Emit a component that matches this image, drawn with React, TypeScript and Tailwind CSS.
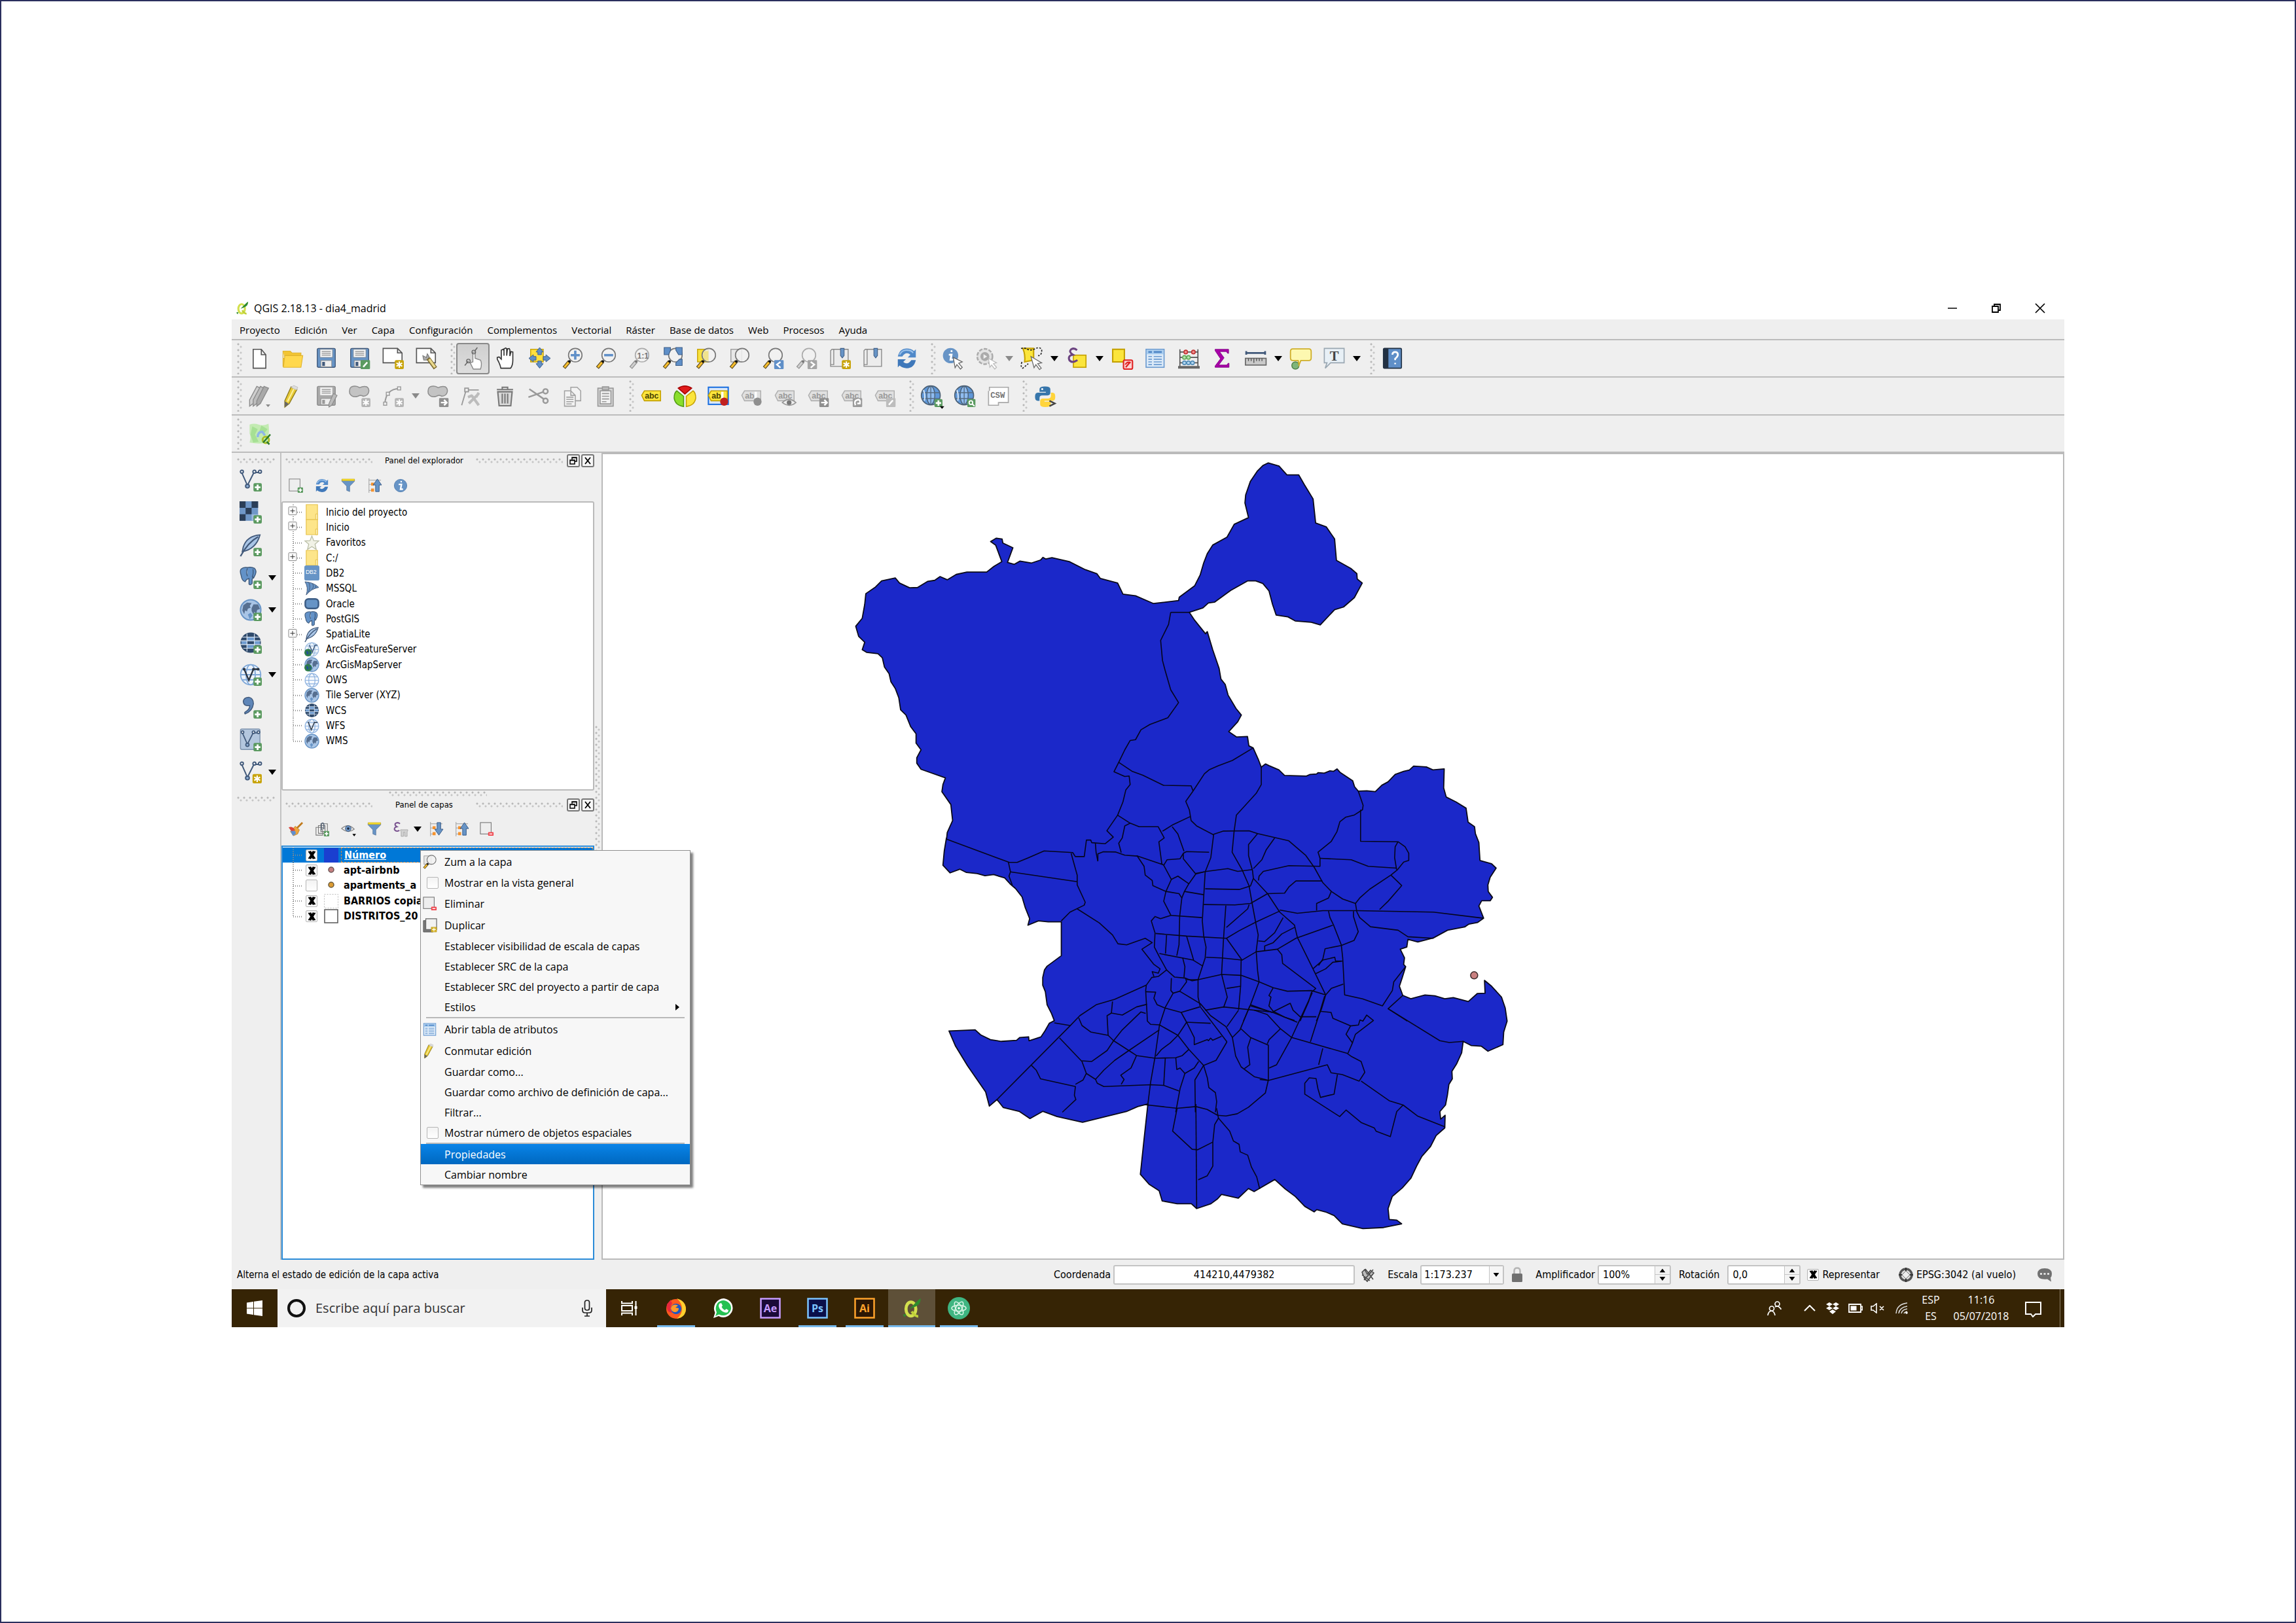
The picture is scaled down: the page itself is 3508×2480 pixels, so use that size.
import React, { ReactNode } from "react";

/* ---------- shared icon parts ---------- */

const Plus = () => (
  <g>
    <rect x="15" y="15" width="9" height="9" rx="1.5" fill="#5b9a60" />
    <path d="M19.500 16.500v6M16.500 19.500h6" stroke="#fff" strokeWidth="2" />
  </g>
);
const Star = ({ c = "#c8a40c" }: { c?: string }) => (
  <g>
    <rect x="14" y="14" width="10" height="10" rx="1.500" fill={c} />
    <path d="M19 15.500v7M15.800 17.200l6.400 3.600M22.200 17.200l-6.400 3.600" stroke="#fff" strokeWidth="1.500" />
  </g>
);
const Lens = ({ grey = false }: { grey?: boolean }) => (
  <g>
    <path d="M8 15.500L2 22.500" stroke={grey ? "#8f8f8f" : "#5a4a20"} strokeWidth="4" />
    <path d="M7.500 16L2.500 22" stroke={grey ? "#cfcfcf" : "#fbc02d"} strokeWidth="2.200" />
    <circle cx="8" cy="15.500" r="1.500" fill={grey ? "#777" : "#111"} />
    <circle cx="14.500" cy="8.500" r="7.500" fill="#f1f1f1" fillOpacity=".85" stroke={grey ? "#aaa" : "#777"} strokeWidth="1.200" />
  </g>
);
const Floppy = ({ grey = false }: { grey?: boolean }) => (
  <g>
    <rect x="2" y="1" width="20" height="21" rx="1.500" fill={grey ? "#a9a9a9" : "#6794c6"} stroke={grey ? "#8e8e8e" : "#41597a"} />
    <rect x="5" y="2" width="14" height="9" fill="#f4f4f4" stroke={grey ? "#aaa" : "#6b7a8c"} strokeWidth=".6" />
    <path d="M7 4.500h10M7 6.500h10M7 8.500h10" stroke="#8b8b8b" strokeWidth=".9" />
    <rect x="6" y="14.500" width="12" height="7" fill="#eee" stroke="#8a8a8a" strokeWidth=".6" />
    <rect x="7.500" y="16" width="3" height="4.500" fill={grey ? "#999" : "#41597a"} />
  </g>
);
const Tag = ({ grey = false, t = "abc" }: { grey?: boolean; t?: string }) => (
  <g>
    <path d="M1 11l3-5h18v11H4z" fill={grey ? "#e0e0e0" : "#fbe53c"} stroke={grey ? "#b0b0b0" : "#c4a000"} strokeWidth="1.100" />
    <text x="4.500" y="14.500" fontSize="9" fontWeight="700" fontFamily="Liberation Sans, sans-serif" fill={grey ? "#999" : "#4a4300"}>
      {t}
    </text>
  </g>
);
const Badge = ({ c, d }: { c: string; d: string }) => (
  <g>
    <rect x="13" y="14" width="10.500" height="10" rx="1" fill={c} />
    <path d={d} stroke="#fff" strokeWidth="1.800" fill="none" />
  </g>
);
const VLine = ({ c = "#41597a" }: { c?: string }) => (
  <g fill="none" stroke={c} strokeWidth="1.400">
    <path d="M2.500 4l6 13.500L15.500 3.500h6" />
    <circle cx="2.500" cy="2.700" r="1.600" fill="#fff" />
    <circle cx="8.500" cy="18.200" r="2" fill="#8fb0d6" />
    <circle cx="16" cy="2.700" r="1.600" fill="#fff" />
    <circle cx="22" cy="2.700" r="1.600" fill="#fff" />
  </g>
);
const Wire = ({ fill, stroke }: { fill: string; stroke: string }) => (
  <g fill="none" stroke={stroke} strokeWidth="1.300">
    <circle cx="12" cy="12" r="10.800" fill={fill} />
    <ellipse cx="12" cy="12" rx="5" ry="10.800" />
    <path d="M1.200 12h21.600M3 6.500h18M3 17.500h18" />
  </g>
);
const WebGlobe = () => (
  <g>
    <circle cx="11" cy="11" r="10.500" fill="#5f97d8" stroke="#4b6075" strokeWidth="1.200" />
    <ellipse cx="11" cy="11" rx="4.500" ry="10" fill="#8fbcf0" stroke="#4b6075" strokeWidth="1" />
    <path d="M1 8h20M1 14.500h20M11 .5v21" stroke="#566b80" strokeWidth="1" />
    <path d="M3 5q2 6 1 12" stroke="#dcebfb" strokeWidth="1.300" fill="none" />
  </g>
);
const Earth = () => (
  <g>
    <circle cx="12" cy="12" r="11" fill="#a9c5e6" stroke="#6794c6" strokeWidth="1.400" />
    <path d="M4 7l4-3 5 .5-2 3 1 2-3 1-1 3-2-1-1 4-2-4zM13 10l2-4 5 0 2 5-3 1-1 4-2-2-1 3-2-4z" fill="#41597a" opacity=".8" />
    <path d="M9 17l3-2 2 3-3 4z" fill="#6794c6" />
  </g>
);
const DarkGlobe = () => (
  <g>
    <circle cx="12" cy="12" r="11" fill="#2f4a6b" />
    <path d="M8 6h8v4H8zM2 10h6v4H2zM16 10h6v4h-6zM8 14h8v4H8z" fill="#6f9cd0" />
    <path d="M1 10h22M1 14h22M3 6h18M4 18h16M8 2.500v19M16 2.500v19" stroke="#dfe9f5" strokeWidth=".8" />
  </g>
);
const Elephant = () => (
  <path d="M2 3q3-3 8-2 5-1 9 1 3 3 1 8l-2 4-1-1-1 3v5q-2 3-4 1V15l-3 1-2 3q-4-1-5-8Q0 5 2 3zM10 2q-2 5 0 10M17 3q1 6-1 10" fill="#6392c8" stroke="#3f5b7d" strokeWidth="1.200" />
);
const Feather = () => (
  <g>
    <path d="M22 1Q8 2 4 14l-1 5Q18 16 22 1z" fill="#a9c5e6" stroke="#41597a" strokeWidth="1.300" />
    <path d="M20 3Q9 9 1 24" fill="none" stroke="#41597a" strokeWidth="1.600" />
  </g>
);
const Folder = () => (
  <g>
    <path d="M3 0h18v24H3z" fill="#fde58a" stroke="#e6c14a" strokeWidth="1.200" />
    <path d="M18 15h3v9h-3z" fill="#fdf0b5" stroke="#e6c14a" />
  </g>
);
const Refresh = () => (
  <g fill="#5089c9">
    <path d="M2 10Q4 1 12 1q5 0 8 3l2-2v9h-9l3-3q-5-4-9 2z" />
    <path d="M22 14q-2 9-10 9-5 0-8-3l-2 2v-9h9l-3 3q5 4 9-2z" fill="#3f78ba" />
    <path d="M4 8q3-6 9-5 4 0 6 3" stroke="#9cc3ec" strokeWidth="1.500" fill="none" />
  </g>
);
const Info = () => (
  <g>
    <circle cx="12" cy="12" r="10.500" fill="#6794c6" stroke="#5580b0" />
    <path d="M13 5.500h.1M10 10h3.500l-1.500 8h3" stroke="#fff" strokeWidth="2.600" fill="none" strokeLinecap="round" />
  </g>
);
const Funnel = () => (
  <g>
    <path d="M1.500 2h21v3l-8 8v9l-5-2v-7l-8-8z" fill="#6794c6" stroke="#55749a" strokeWidth=".8" />
    <path d="M1.500 1h21v3h-21z" fill="#f5dc2a" stroke="#c4a000" strokeWidth=".5" />
  </g>
);
const TreeArrow = ({ down = false }: { down?: boolean }) => (
  <g>
    <path d="M3 0v24M3 3h20M3 10h7M3 20h7" stroke="#999" fill="none" />
    <path d="M6.500 7h5v5h-5zM6.500 17h5v5h-5z" fill="#f6922d" />
    <path d={down ? "M14 1h6v11h4l-7 10-7-10h4z" : "M14 22h6V11h4L17 1l-7 10h4z"} fill="#6794c6" stroke="#355683" />
  </g>
);
const Pencil = () => (
  <g>
    <path d="M10 1.500l6.500 3L8 20l-5 4 0-7z" fill="#e8ca35" stroke="#8d7a1c" strokeWidth="1" />
    <path d="M13.500 3L6 18" stroke="#fbf0a0" strokeWidth="1.500" />
    <path d="M10 2l3-2 4.500 2-1.500 3z" fill="#ddd" stroke="#bbb" strokeWidth=".6" />
    <path d="M3 17.500l4.500 3L3 24z" fill="#666" />
  </g>
);
const Blob = () => (
  <path d="M3 1.500q5-2 9 1 4-2 8-1 3 2 2 6-1 4-6 4.500-3-2-6 0-6 2-9-3-1-6 2-7.500z" fill="#c3c3c3" stroke="#8d8d8d" strokeWidth="1.100" />
);

const ICONS: Record<string, ReactNode> = {
  newFile: <path d="M5 2h9l5 6v15H5zM14 2v6h5" fill="#fff" stroke="#555" strokeWidth="1.200" />,
  open: (
    <g stroke="#dfb32f" strokeWidth=".8">
      <path d="M1 4h8l2 2h10v6H1zM1 4v17h4" fill="#f2c433" />
      <path d="M3 9h20l-2 13H1.500z" fill="#ffd84d" />
    </g>
  ),
  save: <Floppy />,
  saveAs: (
    <g>
      <Floppy />
      <Badge c="#5b9a60" d="M16 21.500l4.500-5" />
    </g>
  ),
  composer: (
    <g>
      <path d="M1 1h16l5 5v11H1zM17 1v5h5" fill="#fff" stroke="#555" strokeWidth="1.200" />
      <Star />
    </g>
  ),
  manager: (
    <g>
      <path d="M1 1h16l5 5v11H1zM17 1v5h5" fill="#fff" stroke="#555" strokeWidth="1.200" />
      <path d="M8 9l4 2 1-4 2 3-1 4-5 0z" fill="#aaa" stroke="#777" strokeWidth=".8" />
      <path d="M14 12l8 11" stroke="#7d6c33" strokeWidth="4.600" />
      <path d="M15 13l6.500 9" stroke="#ead98c" strokeWidth="2.600" />
    </g>
  ),
  touch: (
    <g>
      <path d="M9 17l3-1V6q1.500-2 2.500 0v6l6 2q2 4 0 10h-8z" fill="#fff" stroke="#888" />
      <path d="M14 4l3-4M7 15l-4 5" stroke="#666" strokeWidth="1.100" />
      <circle cx="13" cy="5" r="2" fill="none" stroke="#666" />
      <circle cx="7" cy="15" r="2" fill="none" stroke="#666" />
    </g>
  ),
  hand: (
    <path d="M6 23Q5 18 2 13l0-2 2-.5L6.500 13V3l2-1 1 1.500V9 1.500l2-1 1 1V9l.8-7.500 2-.3.700 1.300V9.500l1.300-5 2 .5v9q0 6-2.500 9z" fill="#fff" stroke="#333" strokeWidth="1.200" />
  ),
  panSel: (
    <g>
      <rect x="2" y="2" width="14" height="14" fill="#ffdf3d" stroke="#c4a000" />
      <path d="M12 0l4 5h-2v3h-4V5H8zM12 23l4-5h-2v-3h-4v3H8zM0 12l5-4v2h3v4H5v2zM24 12l-5-4v2h-3v4h3v2z" fill="#5f8fc8" stroke="#3f5f88" strokeWidth=".7" />
    </g>
  ),
  zoomIn: (
    <g>
      <Lens />
      <path d="M14.500 3.500v10M9.500 8.500h10" stroke="#5f8fc8" strokeWidth="2.600" />
    </g>
  ),
  zoomOut: (
    <g>
      <Lens />
      <path d="M9.500 8.500h10" stroke="#5f8fc8" strokeWidth="2.600" />
    </g>
  ),
  zoomOne: (
    <g>
      <Lens grey />
      <text x="9" y="12" fontSize="9" fontWeight="700" fontFamily="Liberation Sans, sans-serif" fill="#777">
        1:1
      </text>
    </g>
  ),
  zoomFull: (
    <g>
      <Lens />
      <path d="M2 0h7v3L7 8H2zM22 0h-7v3l3 5h4zM22 20h-7v-3l4-4h3z" fill="#5f8fc8" stroke="#3f5f88" strokeWidth=".8" />
    </g>
  ),
  zoomSel: (
    <g>
      <rect x="2" y="2" width="12" height="14" fill="#f8e23d" stroke="#c4a000" />
      <Lens />
      <path d="M9 4h5v11Q8 14 8 9z" fill="#efe07a" opacity=".8" />
    </g>
  ),
  zoomLayer: (
    <g>
      <rect x="2" y="2" width="12" height="14" fill="#e8e8e8" stroke="#999" />
      <Lens />
    </g>
  ),
  zoomLast: (
    <g>
      <Lens />
      <Badge c="#5f8fc8" d="M20 16l-4 3 4 3.500" />
    </g>
  ),
  zoomNext: (
    <g>
      <Lens grey />
      <Badge c="#a5a5a5" d="M16.500 16l4 3-4 3.500" />
    </g>
  ),
  bookNew: (
    <g>
      <path d="M3 2h18v19H1.500V3.500zM5 2v17H1.500" fill="#ececec" stroke="#888" />
      <path d="M12.500 1h4v8l-2 2.500-2-2.500z" fill="#6794c6" stroke="#3f5f88" strokeWidth=".8" />
      <Star />
    </g>
  ),
  book: (
    <g>
      <path d="M3 2h18v19H1.500V3.500zM5 2v17H1.500" fill="#ececec" stroke="#888" />
      <path d="M12.500 1h4v8l-2 2.500-2-2.500z" fill="#6794c6" stroke="#3f5f88" strokeWidth=".8" />
    </g>
  ),
  refresh: <Refresh />,
  identify: (
    <g>
      <circle cx="9" cy="9" r="8.500" fill="#6794c6" />
      <path d="M10 4h.1M8 8h2l-1 5.500h2" stroke="#fff" strokeWidth="2.200" fill="none" strokeLinecap="round" />
      <path d="M12 11l10 5-4 1.500 4 4.500-2 2-4-5-2 3.500z" fill="#fff" stroke="#666" strokeWidth=".9" />
    </g>
  ),
  action: (
    <g>
      <circle cx="10" cy="10" r="8.500" fill="#e2e2e2" stroke="#aaa" strokeWidth="1.800" strokeDasharray="4 1.500" />
      <circle cx="10" cy="10" r="5" fill="#aaa" />
      <path d="M8.500 7.500l4 2.500-4 2.500z" fill="#eee" />
      <path d="M14 12l9 5-3.500 1 3.500 4-2 2-3.500-4.500-2 2.500z" fill="#fff" stroke="#bbb" strokeWidth=".9" />
    </g>
  ),
  select: (
    <g>
      <path d="M2 1h12v13l-10 2q1-8-2-15z" fill="#fbe53c" stroke="#c4a000" strokeWidth="1.500" />
      <path d="M0 1q5-1 7 1 5 2 9-1 6-2 7 2 0 6-4 6M1 16q-2 6 1 7l6-5" fill="none" stroke="#222" strokeWidth="1.200" strokeDasharray="2 1.500" />
      <path d="M11 10l12 7-4.500 1 4 5-2 1.500-4-5.500-2 3.500z" fill="#fff" stroke="#666" strokeWidth=".9" />
    </g>
  ),
  selExpr: (
    <g>
      <rect x="8" y="8.500" width="14" height="13.500" fill="#fbe53c" stroke="#c4a000" strokeWidth="1.200" />
      <path d="M12 3Q9 0 5.500 2q-3 3 2 6-6 1-4 6 3 4 9 0" fill="none" stroke="#6b4380" strokeWidth="2.200" />
    </g>
  ),
  deselect: (
    <g>
      <rect x="1.500" y="2" width="13" height="14" fill="#fbe53c" stroke="#c4a000" strokeWidth="1.500" />
      <rect x="13.500" y="14" width="10" height="10" rx="1.500" fill="#fbd3d3" stroke="#e02020" strokeWidth="1.500" />
      <path d="M16 22l5-6M15.500 19q2-4 6-2" stroke="#e02020" strokeWidth="1.500" fill="none" />
    </g>
  ),
  table: (
    <g>
      <rect x="1.500" y="2" width="20" height="20" fill="#dceaf8" stroke="#6a9ad0" strokeWidth="1.200" />
      <path d="M2 3h19v4.500H2z" fill="#a9cdef" />
      <path d="M4 5h4M10 5h9" stroke="#4f86c6" strokeWidth="2" />
      <path d="M4 10h4M10 10h9M4 13h4M10 13h9M4 16h4M10 16h9M4 19h4M10 19h9" stroke="#6a9ad0" strokeWidth="1.100" />
    </g>
  ),
  abacus: (
    <g>
      <path d="M2 2v19M22 2v19M2 5h20M2 11h20M2 17h20" stroke="#555" strokeWidth="1.200" />
      <path d="M0 20.500h24v3H0z" fill="#666" />
      <g strokeWidth="1.100">
        <circle cx="8.500" cy="5" r="2" fill="#f09090" stroke="#c03030" />
        <circle cx="17" cy="5" r="2" fill="#f09090" stroke="#c03030" />
        <circle cx="7" cy="11" r="2" fill="#b6e3b0" stroke="#5faa58" />
        <circle cx="11.500" cy="11" r="2" fill="#b6e3b0" stroke="#5faa58" />
        <circle cx="7" cy="17" r="2" fill="#b0d4ee" stroke="#4f8ab6" />
        <circle cx="11.500" cy="17" r="2" fill="#b0d4ee" stroke="#4f8ab6" />
        <circle cx="16" cy="17" r="2" fill="#b0d4ee" stroke="#4f8ab6" />
      </g>
    </g>
  ),
  sigma: <path d="M4 2h15v4.500h-1L16.500 4.500H9l5 7-6 8h9l1.500-2h1V22H4v-1.500l6-8-6-9z" fill="#a800a8" stroke="#7c0080" strokeWidth=".6" />,
  measure: (
    <g>
      <path d="M1.500 6h21M1.500 4v4M22.500 4v4" stroke="#41597a" strokeWidth="2" />
      <rect x=".6" y="12" width="23" height="7.500" fill="#c9c9c9" stroke="#666" strokeWidth="1.200" />
      <path d="M4 12v3M7 12v3M10 12v5M13 12v3M16 12v3M19 12v3" stroke="#555" strokeWidth="1" />
    </g>
  ),
  mapTip: (
    <g>
      <circle cx="6" cy="20" r="4" fill="#7fb57a" stroke="#4d8048" />
      <path d="M3 1.500h18q2.500 0 2.500 3v7q0 3-2.500 3h-9l-2 5-1-5H3q-2.500 0-2.500-3v-7q0-3 2.500-3z" fill="#fdf8b0" stroke="#cfae28" strokeWidth="1.300" />
    </g>
  ),
  annotation: (
    <g>
      <path d="M1 1h22v16H8l-6 6 2-6H1z" fill="#e8f0f6" stroke="#9aa7b2" strokeWidth="1.200" />
      <text x="12" y="14.500" textAnchor="middle" fontSize="15" fontWeight="700" fontFamily="Liberation Serif, serif" fill="#444">
        T
      </text>
    </g>
  ),
  help: (
    <g>
      <rect x="2" y="1" width="20" height="22" rx="1" fill="#5f8fc8" stroke="#223143" strokeWidth="1.200" />
      <path d="M2 1h5.500v22H2z" fill="#223143" />
      <path d="M12 8q0-3 3-3t3 3q0 2-3 4.500V14M15 17v1.500" stroke="#fff" strokeWidth="2" fill="none" />
    </g>
  ),
  pencils: (
    <g stroke="#8b8b8b" strokeWidth="1">
      <path d="M9 1l4 2L5 20l-4 3V16z" fill="#cfcfcf" />
      <path d="M13 1l4 2L9 20l-4 3V16z" fill="#bdbdbd" />
      <path d="M17 1l5 2L13 20l-4 3V17z" fill="#a9a9a9" />
      <path d="M19 21h5l-2.500 3z" fill="#888" stroke="none" />
    </g>
  ),
  pencil: <Pencil />,
  saveEdits: (
    <g>
      <Floppy grey />
      <path d="M20 9l4 2-6 11-3 2v-4z" fill="#bbb" stroke="#888" strokeWidth=".8" />
    </g>
  ),
  addFeature: (
    <g>
      <Blob />
      <Star c="#b5b5b5" />
    </g>
  ),
  curve: (
    <g>
      <path d="M3 20Q4 4 19 3.500" fill="none" stroke="#999" strokeWidth="1.500" />
      <g fill="#eee" stroke="#999">
        <rect x="1.500" y="18.500" width="3.500" height="3.500" />
        <rect x="4.500" y="7.500" width="3.500" height="3.500" />
        <rect x="17" y="1.500" width="3.500" height="3.500" />
      </g>
      <Star c="#b5b5b5" />
    </g>
  ),
  moveFeature: (
    <g>
      <Blob />
      <Badge c="#8f8f8f" d="M15 19h6M18.500 16l3 3-3 3" />
    </g>
  ),
  nodeTool: (
    <g stroke="#999" strokeWidth="1.300" fill="none">
      <path d="M6 5h14M6 5L1 22" />
      <rect x="4.500" y="3" width="4" height="4" fill="#eee" />
      <path d="M9 20L20 9M12 11l8 11M17 13l3-5M8 13l5-2" strokeWidth="3" stroke="#bcbcbc" />
    </g>
  ),
  trash: (
    <g fill="none" stroke="#777" strokeWidth="1.500">
      <path d="M4 7h16l-1.500 15.500h-13z" fill="#d9d9d9" />
      <path d="M3 4.500h18M9 4V2h6v2M9 9v11M12 9v11M15 9v11" />
    </g>
  ),
  scissors: (
    <g stroke="#999" strokeWidth="1.800" fill="none">
      <path d="M2 4l16 11M1 13l17-6" />
      <circle cx="20" cy="6.500" r="2.600" />
      <circle cx="20" cy="17" r="2.600" />
    </g>
  ),
  copy: (
    <g fill="#f3f3f3" stroke="#a2a2a2" strokeWidth="1.100">
      <path d="M11 2h7l4 4v11H11z" />
      <path d="M4 6h7l5 5v12H4zM11 6v5h5" />
      <path d="M6 13h8M6 15.500h8M6 18h8M6 20.500h6" />
    </g>
  ),
  paste: (
    <g fill="#f3f3f3" stroke="#999" strokeWidth="1.200">
      <rect x="4" y="3" width="17" height="20" fill="#d5d5d5" />
      <path d="M6.500 6h12v14.500h-12z" />
      <path d="M9 1.500h7V5H9z" fill="#bbb" />
      <path d="M8.500 9h8M8.500 12h8M8.500 15h8M8.500 18h5" />
    </g>
  ),
  label: <Tag />,
  pie: (
    <g strokeWidth="1.100">
      <path d="M10.500 12v11.500Q1 22 0 14q0-6 3-8z" fill="#8ade2c" stroke="#4f9a10" />
      <path d="M12 9.500L4.500 3Q8 .5 12 .5T19.500 3z" fill="#e01b1b" stroke="#a50000" />
      <path d="M13.500 12L21 6q3 2 3 8-1 8-10.500 9.500z" fill="#fbe53c" stroke="#c4a000" />
    </g>
  ),
  labelPin: (
    <g>
      <rect x="1" y="2" width="22" height="19" fill="#dbe8f8" stroke="#1b6fe0" strokeWidth="1.500" />
      <Tag t="ab" />
      <path d="M16.500 7v10" stroke="#fff" strokeWidth="2.500" />
      <circle cx="18.500" cy="18" r="4.500" fill="#c02020" />
    </g>
  ),
  labelPinGrey: (
    <g>
      <Tag grey t="ab" />
      <path d="M16.500 7v10" stroke="#fff" strokeWidth="2.500" />
      <circle cx="18.500" cy="18" r="4.500" fill="#8f8f8f" />
    </g>
  ),
  labelEye: (
    <g>
      <Tag grey />
      <path d="M9 19q7-7 15 0-7 6-15 0z" fill="#eee" stroke="#999" strokeWidth="1.300" />
      <circle cx="16.500" cy="19" r="2.600" fill="#777" />
    </g>
  ),
  labelMove: (
    <g>
      <Tag grey />
      <Badge c="#8f8f8f" d="M15 19h6M18.500 16l3 3-3 3" />
    </g>
  ),
  labelRotate: (
    <g>
      <Tag grey />
      <Badge c="#9b9b9b" d="M16 22q-2-5 2-6t3 4l-3 0" />
    </g>
  ),
  labelEdit: (
    <g>
      <Tag grey />
      <Badge c="#bdbdbd" d="M16 21.500l4.500-5" />
    </g>
  ),
  globePlus: (
    <g>
      <WebGlobe />
      <Plus />
      <path d="M21 23h5l-2.500 3z" fill="#000" />
    </g>
  ),
  globeSearch: (
    <g>
      <WebGlobe />
      <rect x="14.500" y="15" width="9" height="9" rx="1" fill="#5b9a60" />
      <circle cx="18.500" cy="19" r="2" fill="none" stroke="#fff" strokeWidth="1.300" />
      <path d="M20 20.500l2.500 2.500" stroke="#fff" strokeWidth="1.500" />
    </g>
  ),
  csw: (
    <g>
      <path d="M1 6v16h11v-3h11V2H2v4" fill="#fff" stroke="#a8a8a8" strokeWidth="1.200" />
      <text x="3" y="14" fontSize="9" fontFamily="Liberation Mono, monospace" fontWeight="700" fill="#777">
        CSW
      </text>
    </g>
  ),
  python: (
    <g>
      <path d="M12 1Q6 1 6 4v3h7v1H4Q1 8 1 12.500T4 17h2v-3q0-3 3-3h6q3 0 3-3V4q0-3-6-3z" fill="#3776ab" />
      <path d="M12.500 24q6 0 6-3v-3h-7v-1h9q3 0 3-4.500T20.500 8h-1.800v3.500q0 3-3 3h-6q-3 0-3 3V21q0 3 5.800 3z" fill="#ffd43b" />
      <circle cx="9" cy="4" r="1.100" fill="#fff" />
      <path d="M17 17l6 3-6 3" stroke="#444" strokeWidth="1.800" fill="none" />
    </g>
  ),
  osm: (
    <g>
      <path d="M1 2q5-2 10 0t11-1q1 8 0 12t-1 9q-9 2-20 0 2-6 0-10z" fill="#c3ebb2" />
      <path d="M4 4l6 3-3 6 4 8-6 1-3-9zM14 3l7 4-4 5-5-3z" fill="#9fdd8c" opacity=".8" />
      <path d="M10 16q0-6 5-6l3 4" stroke="#8fb6e8" strokeWidth="2.500" fill="none" />
      <circle cx="19" cy="19" r="3.500" fill="none" stroke="#a8c026" strokeWidth="2.200" />
      <path d="M16 22l8-9M20 21l3 3" stroke="#2d7a2d" strokeWidth="1.800" />
    </g>
  ),
  qgis: (
    <g>
      <ellipse cx="11" cy="13" rx="6" ry="8.500" fill="none" stroke="#d3e04e" strokeWidth="3.800" />
      <path d="M12 16q4 6 8 6" stroke="#c0d038" strokeWidth="3.200" fill="none" />
      <path d="M9 13L19 3q2-2 4-3 0 4-2 7-3 3-7 4z" fill="#2e8b2e" />
      <path d="M1 20l4-1-1 4z" fill="#2e8b2e" />
    </g>
  ),
  vector: (
    <g>
      <VLine />
      <Plus />
    </g>
  ),
  raster: (
    <g>
      <rect x="0" y="0" width="20" height="21" fill="#6f97c8" />
      <path d="M0 0h6.500v7H0zM13 0h7v7h-7zM6.500 7h6.500v7H6.500zM0 14h6.500v7H0z" fill="#2b3e58" />
      <path d="M13 14h7v7h-7z" fill="#9db9dc" />
      <Plus />
    </g>
  ),
  spatialite: (
    <g>
      <Feather />
      <Plus />
    </g>
  ),
  postgis: (
    <g>
      <g transform="scale(.85)">
        <Elephant />
      </g>
      <Plus />
    </g>
  ),
  wms: (
    <g>
      <Earth />
      <Plus />
    </g>
  ),
  wcs: (
    <g>
      <DarkGlobe />
      <Plus />
    </g>
  ),
  wfs: (
    <g>
      <Wire fill="#eef4fb" stroke="#7fa8d8" />
      <path d="M5 6l5 12L15 6h5" stroke="#2b3440" strokeWidth="1.600" fill="none" />
      <circle cx="5" cy="6" r="1.500" fill="#2b3440" />
      <circle cx="15" cy="6" r="1.500" fill="#2b3440" />
      <circle cx="20" cy="6" r="1.500" fill="#2b3440" />
      <Plus />
    </g>
  ),
  comma: (
    <g>
      <path d="M4 5q1-4 6-4 5 1 5 7-1 8-9 11-1-1 0-2 5-3 5-7-7 1-7-5z" fill="#5f86b8" stroke="#41597a" />
      <Plus />
    </g>
  ),
  virtual: (
    <g>
      <rect x="1" y="0" width="21" height="22" rx="1.500" fill="#b4c7de" stroke="#7d93ad" />
      <g transform="translate(1 1) scale(.88)">
        <VLine />
      </g>
      <Plus />
    </g>
  ),
  newShape: (
    <g>
      <VLine />
      <Star />
    </g>
  ),
  addLayer: (
    <g>
      <rect x="1" y="1" width="18" height="20" fill="#eee" stroke="#8a8a8a" strokeWidth="1.200" />
      <Plus />
    </g>
  ),
  funnel: <Funnel />,
  collapse: <TreeArrow />,
  expand: <TreeArrow down />,
  info: <Info />,
  folder: <Folder />,
  star: <path d="M12 1l3 7.500 8 .5-6 5 2 8.500-7-4.500-7 4.500L7 14 1 9l8-.5z" fill="#f1f2e6" stroke="#b9bda4" strokeWidth="1.300" />,
  db2: (
    <g>
      <rect x="0" y="0" width="24" height="24" rx="3" fill="#6794c6" />
      <text x="2" y="14" fontSize="9" fontFamily="Liberation Sans, sans-serif" fill="#fff">
        DB2
      </text>
    </g>
  ),
  mssql: (
    <g>
      <path d="M1 1q14 1 22 9-12 2-20 12 4-12-2-21z" fill="#6794c6" stroke="#41597a" />
      <path d="M7 2q4 8-1 16M13 4q3 5-1 9M18 7q1 3-1 5" stroke="#41597a" fill="none" />
    </g>
  ),
  oracle: <rect x="1.500" y="4.500" width="21" height="15" rx="5" fill="#6794c6" stroke="#3c5c84" strokeWidth="2.600" />,
  elephant: <Elephant />,
  feather: <Feather />,
  arcFeature: (
    <g>
      <Wire fill="#eef4fb" stroke="#9dbde2" />
      <path d="M8 5l5 11 4-11h4" stroke="#41597a" strokeWidth="1.600" fill="none" />
      <circle cx="6" cy="17" r="6" fill="#2f7d4a" />
      <path d="M3 14l3 1 1 4-3 1zM8 14l3 3-2 3z" fill="#234f9a" />
    </g>
  ),
  arcMap: (
    <g>
      <Earth />
      <circle cx="6" cy="17" r="6" fill="#2f7d4a" />
      <path d="M3 14l3 1 1 4-3 1zM8 14l3 3-2 3z" fill="#234f9a" />
    </g>
  ),
  wire: <Wire fill="#f4f8fd" stroke="#8fb3e0" />,
  earth: <Earth />,
  darkGlobe: <DarkGlobe />,
  wfsSmall: (
    <g>
      <Wire fill="#eef4fb" stroke="#8fb3e0" />
      <path d="M6 5l5 13 5-12h5" stroke="#333f4d" strokeWidth="1.600" fill="none" />
    </g>
  ),
  brush: (
    <g>
      <path d="M23 1L14 10" stroke="#c07a1c" strokeWidth="3" />
      <path d="M11 7l7 6-3 7-7 3-5-7z" fill="#eda63c" stroke="#b5741a" strokeWidth=".8" />
      <path d="M0 9q5-2 8 1l3 4-6 2z" fill="#d9453a" />
      <path d="M3 15h8l1 5-5 3z" fill="#5f8fd0" />
    </g>
  ),
  addGroup: (
    <g fill="#f2f2f2" stroke="#777" strokeWidth="1.200">
      <path d="M9 5h11v13H9zM5 8h11v13H5zM1 11h11v13H1z" transform="translate(1 -2)" />
      <path d="M11 14V3q2-3 4 0v9" fill="none" stroke="#4f5f73" strokeWidth="1.500" />
      <g stroke="none">
        <Plus />
      </g>
    </g>
  ),
  eye: (
    <g>
      <path d="M1 11Q12 1 22 12 12 20 1 11z" fill="#f2f2f2" stroke="#8b8b8b" strokeWidth="1.500" />
      <circle cx="12" cy="11" r="4.800" fill="#6f97c8" stroke="#41597a" />
      <circle cx="12" cy="11" r="2" fill="#1c2a3c" />
      <path d="M19 20h6l-3 4z" fill="#000" />
    </g>
  ),
  exprFilter: (
    <g>
      <path d="M11 3Q8 0 4 2q-3 3 2 6-5 1-4 5 3 4 8 1" fill="none" stroke="#7a5390" strokeWidth="2.200" />
      <path d="M12 13h12v2l-1 1v8h-4v-7h-2v7h-4v-8l-1-1z" fill="#d2d2d2" stroke="#999" strokeWidth=".8" />
    </g>
  ),
  removeLayer: (
    <g>
      <rect x="1" y="1" width="18" height="19" fill="#eee" stroke="#777" strokeWidth="1.200" />
      <rect x="14" y="17" width="9" height="6" rx="1" fill="#f0474f" />
      <path d="M16 20h5" stroke="#fff" strokeWidth="1.600" />
    </g>
  ),
  duplicate: (
    <g>
      <path d="M1 4h16v19H1z" fill="#777" stroke="#555" />
      <path d="M5 1h18v18H5z" fill="#f2f2f2" stroke="#666" strokeWidth="1.300" />
      <path d="M14 15h9v8h-9z" fill="#d8b62c" stroke="#b3921a" strokeWidth=".6" />
      <path d="M18.500 16v6M15.500 19h6" stroke="#fff" strokeWidth="1.200" />
    </g>
  ),
};

const Icon = ({ n, className = "size-[35px]" }: { n: string; className?: string }) => (
  <svg viewBox="0 0 24 24" className={"shrink-0 overflow-visible " + className} aria-hidden="true">
    {ICONS[n]}
  </svg>
);

const Caret = ({ className = "text-black" }: { className?: string }) => (
  <svg viewBox="0 0 12 8" className={"h-2 w-3 shrink-0 " + className} aria-hidden="true">
    <path d="M0 0h12L6 8z" fill="currentColor" />
  </svg>
);

const DOTS =
  "bg-[radial-gradient(circle_at_2px_2px,#b8b8b8_1px,transparent_2px),radial-gradient(circle_at_6px_6px,#c6c6c6_1px,transparent_2px)] bg-[length:9px_9px]";

/* ---------- toolbars ---------- */

type Tool = string;

/* "|" draws a grip, "v" a black drop-down arrow, "w" a grey one */
const ROW1: Tool[] = [
  "newFile", "open", "save", "saveAs", "composer", "manager", "|",
  "touch", "hand", "panSel", "zoomIn", "zoomOut", "zoomOne", "zoomFull", "zoomSel", "zoomLayer", "zoomLast", "zoomNext", "bookNew", "book", "refresh", "|",
  "identify", "action", "w", "select", "v", "selExpr", "v", "deselect", "table", "abacus", "sigma", "measure", "v", "mapTip", "annotation", "v", "|",
  "help",
];
const ROW2: Tool[] = [
  "pencils", "pencil", "saveEdits", "addFeature", "curve", "w", "moveFeature", "nodeTool", "trash", "scissors", "copy", "paste", "|",
  "label", "pie", "labelPin", "labelPinGrey", "labelEye", "labelMove", "labelRotate", "labelEdit", "|",
  "globePlus", "globeSearch", "csw", "|",
  "python",
];
const ROW3: Tool[] = ["osm"];

const Toolbar = ({ items, className }: { items: Tool[]; className: string }) => (
  <div role="toolbar" className={"flex items-center border-b-2 border-[#bcbcbc] " + className}>
    <div className={"ml-2 h-12 w-[9px] " + DOTS} />
    {items.map((t, i) => {
      if (t === "|")
        return (
          <div key={i} className="flex w-5 justify-end">
            <div className={"h-12 w-[9px] " + DOTS} />
          </div>
        );
      if (t === "v" || t === "w")
        return (
          <button key={i} aria-label="Más opciones" className="flex w-[18px] justify-center">
            <Caret className={t === "v" ? "text-black" : "text-[#8a8a8a]"} />
          </button>
        );
      return (
        <button
          key={i}
          aria-label={t}
          className={
            "flex h-12 w-[51px] items-center justify-center rounded-sm " +
            (t === "touch" ? "border-2 border-[#8a8a8a] bg-linear-to-b from-[#cfcfcf] to-[#dedede]" : "")
          }
        >
          <Icon n={t} className="size-[33px]" />
        </button>
      );
    })}
  </div>
);

const SIDE: [string, boolean][] = [
  ["vector", false],
  ["raster", false],
  ["spatialite", false],
  ["postgis", true],
  ["wms", true],
  ["wcs", false],
  ["wfs", true],
  ["comma", false],
  ["virtual", false],
  ["newShape", true],
];

const Sidebar = () => (
  <div className="flex w-[76px] shrink-0 flex-col border-r-2 border-[#c2c2c2] pt-2">
    <div className={"mx-2 h-[9px] " + DOTS} />
    <div className="grid h-[496px] grid-rows-10">
      {SIDE.map(([n, more]) => (
        <div key={n} className="flex items-center pl-3">
          <button aria-label={n}>
            <Icon n={n} className="size-[34px]" />
          </button>
          {more && (
            <button aria-label="Más opciones" className="ml-2.5">
              <Caret />
            </button>
          )}
        </div>
      ))}
    </div>
    <div className={"mx-2 mt-3 h-[9px] " + DOTS} />
  </div>
);

/* ---------- dock panels ---------- */

const TAHOMA = "font-['DejaVu_Sans_Condensed','Noto_Sans',sans-serif]";
const SEGOE = "font-['Open_Sans','Noto_Sans',sans-serif]";

const DockTitle = ({ children }: { children: ReactNode }) => (
  <div className="flex h-6 items-center pl-1.5">
    <div className={"h-[9px] flex-1 " + DOTS} />
    <h2 className={"w-[158px] text-center text-[13px] leading-5 " + TAHOMA}>{children}</h2>
    <div className={"mr-1.5 h-[9px] flex-1 " + DOTS} />
    <button aria-label="Desacoplar" className="mr-0.5 grid size-5 place-items-center rounded-[3px] border-2 border-[#777] bg-[#f6f6f6]">
      <svg viewBox="0 0 12 12" className="size-3" aria-hidden="true">
        <path d="M4 4V1h7v6H8M1 5h7v6H1zM1 5.500h7M4 1.500h7" fill="none" stroke="#000" strokeWidth="1.500" />
      </svg>
    </button>
    <button aria-label="Cerrar" className="grid size-5 place-items-center rounded-[3px] border-2 border-[#777] bg-[#f6f6f6]">
      <svg viewBox="0 0 12 12" className="size-3" aria-hidden="true">
        <path d="M2 1l8 10M10 1L2 11" stroke="#000" strokeWidth="1.800" />
      </svg>
    </button>
  </div>
);

const Branch = ({ plus = false, last = false, className = "w-9" }: { plus?: boolean; last?: boolean; className?: string }) => (
  <svg className={"h-full shrink-0 overflow-visible " + className} aria-hidden="true">
    <line x1="16" x2="16" y1="0" y2={last ? "50%" : "100%"} stroke="#8a8a8a" strokeWidth="2" strokeDasharray="1 2" />
    <line x1="16" x2="30" y1="50%" y2="50%" stroke="#8a8a8a" strokeDasharray="1 2" strokeWidth="2" />
    {plus && (
      <svg y="50%" overflow="visible">
        <rect x="9" y="-8" width="12" height="12" rx="1" fill="#fff" stroke="#888" />
        <path d="M11.500-2h7M15-5.500v7" stroke="#333" />
      </svg>
    )}
  </svg>
);

const EXPLORER: [string, string, boolean?][] = [
  ["Inicio del proyecto", "folder", true],
  ["Inicio", "folder", true],
  ["Favoritos", "star"],
  ["C:/", "folder", true],
  ["DB2", "db2"],
  ["MSSQL", "mssql"],
  ["Oracle", "oracle"],
  ["PostGIS", "elephant"],
  ["SpatiaLite", "feather", true],
  ["ArcGisFeatureServer", "arcFeature"],
  ["ArcGisMapServer", "arcMap"],
  ["OWS", "wire"],
  ["Tile Server (XYZ)", "earth"],
  ["WCS", "darkGlobe"],
  ["WFS", "wfsSmall"],
  ["WMS", "earth"],
];

const Explorer = () => (
  <section>
    <DockTitle>Panel del explorador</DockTitle>
    <div className="flex h-[50px] items-center pt-0.5 pl-0.5">
      {["addLayer", "refresh", "funnel", "collapse", "info"].map((n) => (
        <button key={n} aria-label={n} className="grid w-10 place-items-center">
          <Icon n={n} className="size-[22px]" />
        </button>
      ))}
    </div>
    <div className="h-[442px] rounded-[3px] border-2 border-[#bababa] bg-white">
      <ul className={"grid h-[376px] grid-rows-16 pt-[3px] text-[15px] leading-5 " + TAHOMA}>
        {EXPLORER.map(([name, icon, plus], i) => (
          <li key={name} className="flex min-h-0 items-center">
            <Branch plus={plus} last={i === EXPLORER.length - 1} className="w-8" />
            <Icon n={icon} className="ml-px size-[23px]" />
            <span className="ml-2.5">{name}</span>
          </li>
        ))}
      </ul>
    </div>
  </section>
);

const Check = ({ id, on = false, className = "size-[18px]" }: { id: string; on?: boolean; className?: string }) => (
  <span className={"grid shrink-0 place-items-center " + className}>
    <input
      id={id}
      type="checkbox"
      defaultChecked={on}
      className="peer col-start-1 row-start-1 size-full appearance-none rounded-[2px] border border-[#b5b5b5] bg-linear-to-b from-[#f3f3f3] to-white"
    />
    <svg viewBox="0 0 12 12" className="pointer-events-none invisible relative col-start-1 row-start-1 size-[13px] peer-checked:visible" aria-hidden="true">
      <path d="M3 1l6 10M9 1L3 11" stroke="#000" strokeWidth="3.800" />
      <path d="M1 1.500h3.500M7.500 1.500H11M1 10.500h3.500M7.500 10.500H11" stroke="#000" strokeWidth="1.600" />
    </svg>
  </span>
);

const LAYERS: { name: string; on: boolean; mark: string }[] = [
  { name: "Número", on: true, mark: "fill" },
  { name: "apt-airbnb", on: true, mark: "pink" },
  { name: "apartments_a", on: false, mark: "orange" },
  { name: "BARRIOS copia", on: true, mark: "dashed" },
  { name: "DISTRITOS_20", on: true, mark: "outline" },
];

const Mark = ({ kind }: { kind: string }) => (
  <svg viewBox="0 0 22 22" className="size-[22px] shrink-0" aria-hidden="true">
    {kind === "fill" && <rect width="22" height="22" fill="#1a3fd0" />}
    {kind === "pink" && <circle cx="11" cy="10" r="4" fill="#c47f80" stroke="#6b5555" strokeWidth="1.500" />}
    {kind === "orange" && <circle cx="11" cy="10" r="4" fill="#dd9c33" stroke="#6b5a3a" strokeWidth="1.500" />}
    {kind === "dashed" && <rect x=".5" y=".5" width="21" height="21" fill="none" stroke="#bbb" strokeDasharray="2 2" />}
    {kind === "outline" && <rect x="1" y="1" width="20" height="20" fill="#fff" stroke="#555" strokeWidth="1.500" />}
  </svg>
);

type Entry = { t: string; icon?: string; check?: boolean; sub?: boolean; active?: boolean } | null;
const MENU: Entry[] = [
  { t: "Zum a la capa", icon: "zoomLayer" },
  { t: "Mostrar en la vista general", check: true },
  { t: "Eliminar", icon: "removeLayer" },
  { t: "Duplicar", icon: "duplicate" },
  { t: "Establecer visibilidad de escala de capas" },
  { t: "Establecer SRC de la capa" },
  { t: "Establecer SRC del proyecto a partir de capa" },
  { t: "Estilos", sub: true },
  null,
  { t: "Abrir tabla de atributos", icon: "table" },
  { t: "Conmutar edición", icon: "pencil" },
  { t: "Guardar como..." },
  { t: "Guardar como archivo de definición de capa..." },
  { t: "Filtrar..." },
  { t: "Mostrar número de objetos espaciales", check: true },
  null,
  { t: "Propiedades", active: true },
  { t: "Cambiar nombre" },
];

const ContextMenu = () => (
  <div
    role="menu"
    className={
      "absolute top-[5px] left-[210px] z-10 w-[413px] border border-[#8f8f8f] bg-[#f7f7f7] text-base shadow-[4px_4px_3px_rgba(0,0,0,0.5)] " + SEGOE
    }
  >
    {MENU.map((m, i) => {
      if (!m) return <hr key={i} className="mx-2 border-t-2 border-[#b9b9b9]" />;
      const body = (
        <>
          <span className="flex w-9 shrink-0 justify-center">
            {m.icon && <Icon n={m.icon} className="mr-2 size-[22px]" />}
            {m.check && <Check id={"menu" + i} />}
          </span>
          <span>{m.t}</span>
          {m.sub && (
            <svg viewBox="0 0 6 10" className="mr-4 ml-auto h-2.5 w-1.5" aria-hidden="true">
              <path d="M0 0l6 5-6 5z" />
            </svg>
          )}
        </>
      );
      const cls =
        "flex w-full items-center whitespace-nowrap text-left " +
        (m.icon ? "h-[33px] " : "h-[31px] ") +
        (m.active ? "bg-linear-to-b from-[#0a84e8] to-[#0068c0] text-white" : "text-black");
      return m.check ? (
        <label key={i} htmlFor={"menu" + i} className={cls}>
          {body}
        </label>
      ) : (
        <button key={i} role="menuitem" className={cls}>
          {body}
        </button>
      );
    })}
  </div>
);

const Layers = () => (
  <section className="flex flex-1 flex-col">
    <DockTitle>Panel de capas</DockTitle>
    <div className="flex h-[50px] items-center pl-0.5">
      {["brush", "addGroup", "eye", "funnel", "exprFilter"].map((n) => (
        <button key={n} aria-label={n} className="grid w-10 place-items-center">
          <Icon n={n} className="size-[22px]" />
        </button>
      ))}
      <button aria-label="Más opciones">
        <Caret />
      </button>
      {["expand", "collapse", "removeLayer"].map((n) => (
        <button key={n} aria-label={n} className="ml-1 grid w-[35px] place-items-center">
          <Icon n={n} className="size-[22px]" />
        </button>
      ))}
    </div>
    <div className="relative flex-1 border-2 border-[#2b8bd8] bg-white">
      <ul className={"grid h-[118px] grid-rows-5 pt-px text-base leading-5 font-bold " + TAHOMA}>
        {LAYERS.map((l, i) => (
          <li key={l.name} className={"flex min-h-0 items-center " + (i === 0 ? "bg-[#0078d7] text-white" : "")}>
            <Branch last={i === LAYERS.length - 1} className="w-[35px]" />
            <Check id={"layer" + i} on={l.on} />
            <span className="ml-2.5">
              <Mark kind={l.mark} />
            </span>
            <label
              htmlFor={"layer" + i}
              className={"ml-1 flex h-full flex-1 items-center pl-1 " + (i === 0 ? "border border-dashed border-[#d98a3c] underline" : "")}
            >
              {l.name}
            </label>
          </li>
        ))}
      </ul>
      <ContextMenu />
    </div>
  </section>
);

/* ---------- map ---------- */

const SHEETS: Record<string, [number, number, number, number]> = {
  A: [1280, 690, 860 / 1568, 640 / 1568],
  B: [1640, 1130, 680 / 1568, 1 / 3],
  C: [1420, 1480, 900 / 1568, 1 / 3],
  D: [1420, 1280, 1 / 3, 1 / 3],
};

/* A string such as "A 10,20 30,40 B 5,6" becomes points in map units. */
const project = (src: string) => {
  let s = SHEETS.A;
  const out: string[] = [];
  for (const tok of src.trim().split(/\s+/)) {
    if (SHEETS[tok]) {
      s = SHEETS[tok];
      continue;
    }
    const [x, y] = tok.split(",").map(Number);
    out.push((s[0] + x * s[2]).toFixed(1) + "," + (s[1] + y * s[3]).toFixed(1));
  }
  return out.join(" ");
};

const OUTLINE = `A 1200,40 1230,52 1252,85 1285,85 1300,120 1325,175 1332,265 1362,280 1385,325 1390,405 1430,435 1447,455 1448,475 1462,490 1440,545 1410,580 1385,590 1345,647 1320,637 1275,632 1255,617 1222,610 1212,570 1202,520 1185,492 1165,482 1143,482 1095,518 1050,562 1033,565 1018,583 980,600 995,630 1025,680 1030,672 1045,740 1063,810 1068,850 1080,870 1088,910 1110,960 1125,985 1115,1010 1090,1047 1112,1067 1142,1065 1146,1100 1158,1108 1172,1150
B 663,125 678,110 690,118 725,137 745,163 822,166 835,158 858,156 863,150 885,152 905,142 918,144 930,133 940,148 985,187 992,215 1005,235 1035,233 1065,237 1088,208 1110,192 1135,158 1165,144 1185,138 1200,120 1245,124 1268,137 1308,133 1306,220 1315,262 1350,285 1385,313 1392,377 1415,398 1418,430 1430,470 1434,553 1475,568 1491,588 1470,630 1462,665 1463,695 1478,722 1470,738 1440,738 1430,762 1447,818 1425,838 1395,845 1380,858 1320,873 1270,908 1215,927 1180,915 1176,950 1153,960 1168,1000 1165,1030 1172,1040 1160,1090 1150,1130 1162,1172 1190,1187 1240,1170 1275,1174 1310,1187 1340,1182 1393,1200 1425,1163 1452,1162 1450,1103 1475,1130 1510,1180
C 1534,180 1539,240 1530,290 1528,348 1488,378 1470,355 1443,352 1422,333 1418,385 1405,435 1392,470 1393,505 1384,530 1380,580 1375,625 1360,655 1362,690 1374,672 1373,730 1350,765 1335,815 1312,860 1298,905 1283,960 1260,1005 1233,1045 1222,1100 1225,1150 1245,1153 1258,1170 1210,1187 1155,1192 1100,1170 1078,1132 1055,1115 1032,1105 1025,1115 1000,1090 975,1045 948,1010 920,967 865,1022 850,1008 823,1052 778,1035 768,1055 750,1078 712,1100 698,1078 660,1078 620,1065 612,1018 585,988 562,943 572,780 582,620 555,632 525,655 408,704 340,678 302,654 268,687 240,655 197,637
D 310,1200 275,1230 258,1165 175,1045 120,955 90,885 210,880 235,903 280,925 330,933 400,928 415,915 455,912 457,930 512,912 530,885 550,850 573,838 560,805 540,765 532,705 520,675 520,640 528,605 540,588 605,540 605,385 545,385 500,380 452,400 460,370 440,320 425,270 395,232 370,210 345,183 295,168 255,173 220,163 170,158 140,143 95,160 62,125 68,60 78,0
A 303,1450 305,1425 320,1380 315,1320 290,1272 293,1245 300,1220 232,1188 220,1165 220,1145 232,1115 218,1090 218,1055 203,1028 190,985 175,965 170,920 160,885 148,860 143,830 130,805 124,770 112,755 80,750 68,740 75,712 58,690 50,652 68,622 75,570 78,530 105,505 122,482 160,471 172,490 200,508 222,507 250,484 270,480 285,466 305,478 330,458 360,449 415,449 435,428 457,410 440,348 426,335 442,322 458,325 460,340 488,358 473,413 492,420 508,408 540,415 565,404 572,394 580,400 597,395 645,410 690,440 722,455 732,473 780,490 795,532 830,538 880,567 950,556 952,543 995,500 1010,460 1020,415 1030,380 1045,348 1085,318 1105,270 1145,245 1135,190 1137,160 1150,110 1170,70 1185,50`;

const BORDERS = [
  "A 928,600 980,600",
  "A 928,600 922,645 900,705 905,780 912,815 928,890 950,938 920,995 870,1020 845,1040 830,1077 815,1080 800,1115 783,1162 770,1197 800,1215 812,1213 815,1245 803,1265 795,1310 780,1360 750,1418 768,1442 745,1467 708,1463 705,1453 693,1453 687,1515 662,1515 655,1500 575,1494 530,1520 500,1537 478,1537 303,1450",
  "A 718,1465 720,1500 725,1533",
  "A 783,1162 820,1195 850,1210 908,1248 985,1250 990,1268",
  "A 1158,1108 1100,1155 1060,1175 1035,1190 1022,1205 990,1270 970,1308 980,1340 985,1380 1000,1400 1048,1434",
  "A 780,1360 815,1390 840,1403 893,1403 910,1445 895,1460 903,1540",
  "A 815,1390 800,1400 793,1445 783,1465 790,1500",
  "A 905,1420 935,1395 983,1365",
  "A 932,1403 948,1430 965,1495",
  "A 725,1530 725,1505 740,1497 775,1498 800,1510 835,1513 905,1545",
  "B 663,125 663,205 645,245 575,345 567,420 560,515 595,595 620,670 630,745 645,850 652,895 645,970 650,1060 655,1110 625,1215 600,1290",
  "B 495,433 530,418 620,417 650,430 760,463 820,530 850,585 880,655 910,695 950,730 995,750 1000,790 1010,815 1048,857 1145,873 1180,903 1270,910",
  "B 1005,235 1022,300 1020,320 990,345 960,355 940,375 930,420 910,465 863,515 870,543 870,580 760,577 670,603 655,625 653,645",
  "B 1013,320 1013,465 1145,467 1135,490 1133,540 1140,595",
  "B 1145,467 1170,490 1183,520 1183,553 1165,560 1142,597 1120,620 1045,685 1010,725 995,750",
  "B 870,543 980,550 1040,580 1140,588",
  "B 1120,620 1158,668 1110,740 1080,778",
  "B 650,430 618,480 618,530 632,600 635,635 685,705 728,790 780,850 790,905 845,1050 890,1170 875,1235 857,1290",
  "B 710,450 680,505 665,550 635,590",
  "B 495,433 485,540 465,605 455,830 460,900 468,950 465,1000 440,1100 440,1180 448,1225",
  "B 430,613 470,603 545,590 580,603 632,595",
  "B 465,683 585,686 625,670 635,635",
  "B 460,755 570,757 625,750 685,705 745,703 760,675 785,647 878,647",
  "B 910,695 900,725 858,750 858,782",
  "B 728,780 790,795 880,783 1000,783 1270,790 1447,818",
  "B 728,785 645,835 585,875 540,910",
  "B 620,755 615,775 540,860",
  "B 538,760 530,910 523,1075 543,1180 530,1228",
  "B 290,888 400,900 540,910 595,1010 523,1000 468,997",
  "B 595,1010 645,972 720,960 785,910 915,850",
  "B 900,785 905,815 918,850 945,940 950,1000 957,1170 1020,1188 1090,1220 1125,1150 1130,1110 1172,1040",
  "B 988,785 988,810 1005,880 990,920 945,943 888,958 880,1005 865,1035",
  "B 740,815 710,885 675,925 652,922",
  "B 780,860 735,890 705,930 675,945 675,965",
  "B 720,960 735,985 738,1025 855,1140 840,1157",
  "B 845,1050 880,1010 922,997 925,1015 947,1015 915,1020 890,1050 855,1072",
  "B 890,1170 910,1140 952,1120",
  "B 400,1100 440,1100 523,1076 592,1080 655,1110 705,1137 755,1153 840,1150 890,1170",
  "B 592,1010 590,1130 583,1238",
  "B 540,1140 590,1130",
  "B 705,1137 690,1172 697,1180 690,1220 705,1245 745,1272 780,1287",
  "B 625,1215 700,1250 765,1208 775,1240 800,1270 857,1270",
  "B 840,1157 830,1200 800,1290",
  "B 1162,1172 1110,1233 1178,1290",
  "D 362,110 372,155 365,175 380,215",
  "D 372,155 678,200",
  "D 650,70 678,170 678,215 715,295 710,308 645,340 605,380",
  "D 678,325 780,390 840,445 865,485 905,490 990,460 1022,480 975,510 1030,580 1058,600 1050,620 1022,613 1030,635",
  "D 952,80 985,130 990,170 1022,195 1025,218 1085,245 1145,255 1158,275 1148,360 1145,490 1135,540",
  "D 1062,115 1075,125 1110,190 1085,245 1075,290 1108,355",
  "D 1110,190 1140,175 1190,210",
  "D 1283,65 1180,62 1165,70 1165,95 1222,165 1190,210 1170,245 1158,275",
  "D 1075,125 1090,100 1150,95 1165,70",
  "D 1222,165 1260,155",
  "D 1170,245 1258,260",
  "D 1108,355 1060,370 1035,360 1018,380 1035,435 1032,500 1055,545 1088,605 1050,635 1020,640 995,675 992,700 998,800 1000,840 1015,855 1055,857",
  "D 1108,355 1250,365",
  "D 1088,445 1083,530",
  "D 1180,450 1212,560",
  "D 1055,530 1210,560 1255,588",
  "D 1162,550 1172,590 1168,640",
  "D 1088,605 1125,638 1175,643 1205,655 1235,650",
  "D 1110,643 1108,700 1118,712 1083,775 1055,860 1035,1005 1015,1120 1001,1230",
  "D 1175,643 1180,660 1148,703 1118,712",
  "D 1148,703 1243,760 1290,815 1360,865 1390,915 1405,1000 1430,1050 1490,1095 1558,1112",
  "D 992,705 1038,707 1030,735 1045,765 1080,780 1155,800 1240,775",
  "D 1265,790 1350,775 1558,797",
  "D 1155,800 1180,845 1215,915 1215,948 1275,925 1280,930 1290,918 1300,928 1340,910",
  "D 1180,845 1290,850",
  "D 1243,775 1365,935",
  "D 1180,845 1140,905 1105,940 1065,970 1040,1000",
  "D 1055,857 1140,905 1190,970 1258,1043 1275,1100 1282,1145 1312,1168 1318,1210 1312,1258",
  "D 1365,935 1315,1020 1258,1043 1218,1110 1220,1258",
  "D 995,675 850,740 765,765 690,815 645,862 310,1200",
  "D 573,848 645,860",
  "D 840,750 835,803 885,812 950,775 998,763",
  "D 835,803 815,815 820,905",
  "D 685,825 700,860 740,890 820,905 845,930 915,975 950,998 1035,1010 1130,1008 1160,998 1190,970",
  "D 992,805 970,798 885,880 845,930 815,975 745,1025 700,1022",
  "D 597,917 700,1025 720,1080 762,1107 770,1125 800,1140 940,1135 1015,1132 1075,1135 1145,1160",
  "D 468,1043 490,1065 510,1105 670,1140 665,1180 672,1200 610,1258",
  "D 720,1080 705,1110 670,1130",
  "D 762,1107 800,1065 850,1020 915,975 1055,880",
  "D 950,998 925,1055 878,1088 893,1108 880,1130",
  "D 1082,1010 1075,1135",
  "D 1130,1008 1135,1062 1150,1055 1172,1080 1150,1150 1130,1258",
  "D 1172,1080 1215,1055 1235,1025",
  "D 1475,915 1460,960 1470,1040 1445,1058",
  "D 1470,770 1425,880 1390,915",
  "D 1418,790 1365,865",
  "C 582,625 660,640 710,632 740,645 768,672 790,675 820,665 850,635 895,570 903,510 903,350 855,315 830,275",
  "C 660,640 648,745 700,828 715,830 755,795 760,715 770,685 765,640",
  "C 710,620 712,1100",
  "C 755,795 755,905 740,950 716,968",
  "C 770,685 800,745 810,790 825,805 828,840 848,855 858,910 872,955 880,1010",
  "C 880,508 903,512 1060,440 1070,477 1100,485 1145,515 1160,475 1150,425 1125,403 1113,388 965,315 935,275 900,210 865,190",
  "C 1048,365 1037,440",
  "C 1053,125 1040,200 1015,335",
  "C 1020,110 985,240 965,315 925,440 905,455",
  "C 935,275 905,325 900,345",
  "C 1150,515 1225,605 1262,625 1300,675 1373,725",
  "C 1262,625 1245,655 1228,770 1190,745 1185,730 1150,705 1110,648 1093,678 1000,575 1000,525 1012,500 1030,503 1035,550 1042,590 1078,575 1087,485",
  "C 1222,183 1360,330 1385,338 1422,333",
  "C 1040,195 1070,200 1075,227 1122,262 1110,300 1127,340 1115,388",
  "C 1122,262 1143,258 1147,235 1155,240 1165,212 1183,237 1135,300 1127,340",
  "C 855,170 915,200 980,245",
];

const MapCanvas = () => (
  <main className="relative flex-1 border-2 border-[#bababa] bg-white">
    <svg viewBox="922 693 2230 1230" className="absolute inset-0 size-full" role="img" aria-label="Mapa de los barrios de Madrid">
      <polygon points={project(OUTLINE)} fill="#1b28c9" stroke="#0a0a18" strokeWidth="1.800" strokeLinejoin="round" />
      <g fill="none" stroke="#05051c" strokeWidth="1.600" strokeLinejoin="round">
        {BORDERS.map((b, i) => (
          <polyline key={i} points={project(b)} />
        ))}
      </g>
      <circle cx="2253" cy="1490" r="5.500" fill="#c98080" stroke="#3a2a2a" strokeWidth="1.500" />
    </svg>
  </main>
);

/* ---------- status bar ---------- */

const FIELD = "rounded-[3px] border-2 border-[#c4c4c4] bg-white text-black";

const Spin = ({ id, value }: { id: string; value: string }) => (
  <span className={"flex h-[30px] w-[112px] overflow-hidden " + FIELD}>
    <input id={id} defaultValue={value} className="w-0 flex-1 pl-1.5" />
    <span className="flex w-[23px] flex-col border-l border-[#c4c4c4] bg-[#f3f3f3]">
      <button aria-label="Aumentar" className="grid flex-1 rotate-180 place-items-center">
        <Caret className="scale-75" />
      </button>
      <button aria-label="Disminuir" className="grid flex-1 place-items-center border-t border-[#c4c4c4]">
        <Caret className="scale-75" />
      </button>
    </span>
  </span>
);

const StatusBar = () => (
  <footer className={"flex h-[45px] items-center pr-[18px] pl-2 text-base leading-5 whitespace-nowrap " + TAHOMA}>
    <p className="mr-auto text-[15px]">Alterna el estado de edición de la capa activa</p>
    <label htmlFor="coord" className="mr-1">
      Coordenada
    </label>
    <input id="coord" defaultValue="414210,4479382" className={"h-[30px] w-[369px] text-center " + FIELD} />
    <button aria-label="Extensión" className="mr-[18px] ml-2">
      <svg viewBox="0 0 24 24" className="size-6" aria-hidden="true">
        <path d="M3 8l4-4 4 7 5-6 5 4-7 9-3 4-4-4zM8 3l12 16M3 12l12 9M20 4L6 20" fill="#bbb" stroke="#444" strokeWidth="1.500" />
      </svg>
    </button>
    <label htmlFor="scale" className="mr-1">
      Escala
    </label>
    <span className={"relative flex h-[30px] w-[128px] items-center " + FIELD}>
      <select id="scale" className="size-full appearance-none pl-1">
        <option>1:173.237</option>
      </select>
      <span className="pointer-events-none absolute inset-y-0 right-0 grid w-[21px] place-items-center border-l border-[#c4c4c4] bg-[#f6f6f6]">
        <Caret className="scale-75" />
      </span>
    </span>
    <button aria-label="Bloquear escala" className="mx-[11px]">
      <svg viewBox="0 0 18 24" className="h-6 w-[18px]" aria-hidden="true">
        <path d="M4.500 11V6q0-4.500 4.500-4.500T13.500 6v5" fill="none" stroke="#b5b5b5" strokeWidth="2.500" />
        <rect x="1" y="10" width="16" height="13" rx="1.500" fill="#707070" />
      </svg>
    </button>
    <label htmlFor="mag" className="mr-1 ml-2">
      Amplificador
    </label>
    <Spin id="mag" value="100%" />
    <label htmlFor="rot" className="mr-3 ml-3">
      Rotación
    </label>
    <Spin id="rot" value="0,0" />
    <span className="ml-2.5 flex items-center gap-[5px]">
      <Check id="render" on />
      <label htmlFor="render">Representar</label>
    </span>
    <button className="ml-7 flex items-center gap-1">
      <svg viewBox="0 0 24 24" className="size-6" aria-hidden="true">
        <circle cx="12" cy="12" r="9" fill="#ddd" stroke="#555" strokeWidth="3.500" />
        <path d="M12 1v6M12 17v6M1 12h6M17 12h6" stroke="#333" strokeWidth="2" />
        <path d="M12 6l6 6-6 6-6-6z" fill="#eee" stroke="#777" />
      </svg>
      EPSG:3042 (al vuelo)
    </button>
    <button aria-label="Mensajes" className="ml-8">
      <svg viewBox="0 0 24 22" className="h-[22px] w-6" aria-hidden="true">
        <path d="M12 1q11 0 11 8.500 0 4-2 6l1 6-6-4Q1 19 1 9.500 1 1 12 1z" fill="#717171" />
        <path d="M5 9.500h3M10.500 9.500h3M16 9.500h3" stroke="#efefef" strokeWidth="2.500" />
      </svg>
    </button>
  </footer>
);

/* ---------- taskbar ---------- */

const Adobe = ({ t, c, bg }: { t: string; c: string; bg: string }) => (
  <svg viewBox="0 0 32 32" className="size-8" aria-hidden="true">
    <rect x="1.500" y="1.500" width="29" height="29" fill={bg} stroke={c} strokeWidth="2.500" />
    <text x="16" y="22" textAnchor="middle" fontSize="16" fontWeight="700" fontFamily="Open Sans, sans-serif" fill={c}>
      {t}
    </text>
  </svg>
);

const APPS: { name: string; open?: boolean; active?: boolean; icon: ReactNode }[] = [
  {
    name: "Firefox",
    open: true,
    icon: (
      <svg viewBox="0 0 32 32" className="size-8" aria-hidden="true">
        <circle cx="16" cy="17" r="15" fill="#ff5a1f" />
        <path d="M17 1q14 4 14 17-1 12-14 14 8-6 8-15T17 1z" fill="#ffd02e" />
        <path d="M2 10q4-5 6-7 0 3 2 5-5 9 0 15Q0 22 2 10z" fill="#e8283c" />
        <circle cx="16" cy="17" r="8" fill="#1a56c4" />
        <path d="M10 12q5-3 9 0l-4 3 5 1q0 5-5 6-6 0-7-6z" fill="#ff9a28" />
      </svg>
    ),
  },
  {
    name: "WhatsApp",
    icon: (
      <svg viewBox="0 0 32 32" className="size-8" aria-hidden="true">
        <path d="M1 31l2.500-8Q0 16 4 8.500 9 1 17 1q8 1 12 8 3 7 0 13-5 8-13 8-4 0-7-2z" fill="#fff" />
        <path d="M4 28l2-5.500Q3 16 6.500 9.500 10 4 17 4q6 1 9.500 6 3 6 0 11-4 6-10.500 6-3 0-6.500-1.500z" fill="#25c152" />
        <path d="M10 9l3-1 2 4-1.500 2q1.500 3.500 5 5l2-2 3.500 2-1 3q-3 2-8-1-6-4-6-9z" fill="#fff" />
      </svg>
    ),
  },
  { name: "After Effects", icon: <Adobe t="Ae" c="#c79cff" bg="#1b0a38" /> },
  { name: "Photoshop", open: true, icon: <Adobe t="Ps" c="#7cc4ff" bg="#0a0f4a" /> },
  { name: "Illustrator", open: true, icon: <Adobe t="Ai" c="#ffa32b" bg="#2b1704" /> },
  { name: "QGIS", open: true, active: true, icon: <Icon n="qgis" className="size-[30px]" /> },
  {
    name: "Atom",
    open: true,
    icon: (
      <svg viewBox="0 0 34 34" className="size-[34px]" aria-hidden="true">
        <circle cx="17" cy="17" r="17" fill="#3fb581" />
        <g fill="none" stroke="#d9f5e6" strokeWidth="1.500">
          <ellipse cx="17" cy="17" rx="11" ry="4.500" />
          <ellipse cx="17" cy="17" rx="11" ry="4.500" transform="rotate(60 17 17)" />
          <ellipse cx="17" cy="17" rx="11" ry="4.500" transform="rotate(120 17 17)" />
        </g>
        <circle cx="17" cy="17" r="1.800" fill="#fff" />
      </svg>
    ),
  },
];

const Taskbar = () => (
  <nav className={"flex h-[58px] items-stretch bg-[#362405] text-white " + SEGOE}>
    <button aria-label="Inicio" className="grid w-[70px] place-items-center">
      <svg viewBox="0 0 24 24" className="size-6" aria-hidden="true">
        <path d="M0 3.500L10 2v9.500H0zM11 1.800L24 0v11.500H11zM0 12.500h10V22L0 20.500zM11 12.500h13V24l-13-1.800z" fill="#fff" />
      </svg>
    </button>
    <label className="flex w-[502px] items-center bg-[#f2f2f2] pr-5 pl-3.5">
      <svg viewBox="0 0 30 30" className="mr-3.5 size-[30px]" aria-hidden="true">
        <circle cx="15" cy="15" r="12" fill="none" stroke="#111" strokeWidth="4" />
      </svg>
      <input aria-label="Buscar" placeholder="Escribe aquí para buscar" className="flex-1 text-xl text-black placeholder:text-[#333]" />
      <svg viewBox="0 0 18 26" className="h-[26px] w-[18px]" fill="none" stroke="#222" strokeWidth="1.700" aria-hidden="true">
        <rect x="5.500" y="1" width="7" height="15" rx="3" />
        <path d="M2 12v4q0 4 4 4h6q4 0 4-4v-4M9 20v5M5 25h8" />
      </svg>
    </label>
    <button aria-label="Vista de tareas" className="grid w-[71px] place-items-center">
      <svg viewBox="0 0 26 22" className="h-[22px] w-[26px]" fill="none" stroke="#fff" strokeWidth="2" aria-hidden="true">
        <path d="M1 0v3.500h16V0M1 22v-3.500h16V22M1 7h16v8H1zM22.500 0v22" />
        <path d="M20.500 8h4v4h-4z" fill="#fff" stroke="none" />
      </svg>
    </button>
    {APPS.map((a) => (
      <button key={a.name} aria-label={a.name} className={"flex w-[72px] flex-col items-center " + (a.active ? "bg-[#5e5038]" : "")}>
        <span className="grid flex-1 place-items-center pt-[3px]">{a.icon}</span>
        <span className={"h-[3px] " + (a.active ? "w-full " : "w-[58px] ") + (a.open ? "bg-[#76b9ed]" : "")} />
      </button>
    ))}
    <div className="ml-auto flex items-center">
      <svg viewBox="0 0 22 22" className="mr-[34px] size-[22px]" fill="none" stroke="#fff" strokeWidth="1.700" aria-hidden="true">
        <circle cx="15.500" cy="4.500" r="3.500" />
        <circle cx="7" cy="11.500" r="3.500" />
        <path d="M1 22q1-7 6-7 4 1 5 7M12 9q4-2 6 0 3 2 3 4" />
      </svg>
      <svg viewBox="0 0 18 10" className="mr-4 h-2.5 w-[18px]" fill="none" stroke="#fff" strokeWidth="2" aria-hidden="true">
        <path d="M1 9l8-8 8 8" />
      </svg>
      <svg viewBox="0 0 20 18" className="mr-3.5 h-[18px] w-5" fill="#fff" aria-hidden="true">
        <path d="M5 0l5 3-5 3-5-3zM15 0l5 3-5 3-5-3zM5 6l5 3-5 3-5-3zM15 6l5 3-5 3-5-3zM10 11l5 3-5 4-5-4z" />
      </svg>
      <svg viewBox="0 0 22 14" className="mr-3 h-3.5 w-[22px]" aria-hidden="true">
        <path d="M1 1h18v12H1zM20 4.500h1.500v5H20" fill="none" stroke="#fff" strokeWidth="1.800" />
        <path d="M3.500 3.500h9v7h-9z" fill="#fff" />
      </svg>
      <svg viewBox="0 0 22 16" className="mr-4 h-4 w-[22px]" fill="none" stroke="#fff" strokeWidth="1.600" aria-hidden="true">
        <path d="M1 5h3l5-4v14l-5-4H1zM14 5l6 6M20 5l-6 6" />
      </svg>
      <svg viewBox="0 0 20 18" className="mr-3 h-[18px] w-5" fill="none" stroke="#ddd" strokeWidth="1.500" aria-hidden="true">
        <path d="M1 17Q2 3 18 1M5 17q1-9 13-11M9 17q1-6 9-7M13 17q1-2 5-3" />
        <circle cx="17" cy="16" r="1.800" fill="#fff" stroke="none" />
      </svg>
      <div className="w-11 text-center text-base leading-[25px]">
        <div>ESP</div>
        <div>ES</div>
      </div>
      <div className="ml-2.5 w-[90px] text-center text-base leading-[25px]">
        <div>11:16</div>
        <div>05/07/2018</div>
      </div>
      <button aria-label="Notificaciones" className="mr-7 ml-[22px] pt-1">
        <svg viewBox="0 0 25 24" className="h-6 w-[25px]" fill="none" stroke="#fff" strokeWidth="2" aria-hidden="true">
          <path d="M1 1h23v18h-8l-4 4-3-4H1z" />
        </svg>
      </button>
      <div className="mr-1.5 h-[58px] w-px bg-[#8a7d66]" />
    </div>
  </nav>
);

/* ---------- window ---------- */

const MENUS = ["Proyecto", "Edición", "Ver", "Capa", "Configuración", "Complementos", "Vectorial", "Ráster", "Base de datos", "Web", "Procesos", "Ayuda"];

export default function App() {
  return (
    <div className="flex min-h-screen flex-col border-2 border-[#2b2f5e] bg-white px-[352px] pt-[451px] pb-[450px] text-black">
      <div className="flex flex-1 flex-col bg-[#efefef]">
        <header className={"flex h-[35px] items-center bg-white pl-1.5 text-base " + SEGOE}>
          <Icon n="qgis" className="mr-2 size-5" />
          <h1 className="mr-auto">QGIS 2.18.13 - dia4_madrid</h1>
          <button aria-label="Minimizar" className="grid w-[67px] place-items-center">
            <svg viewBox="0 0 14 14" className="size-3.5" stroke="#000" strokeWidth="1.500" aria-hidden="true">
              <path d="M0 7h14" />
            </svg>
          </button>
          <button aria-label="Restaurar" className="grid w-[67px] place-items-center">
            <svg viewBox="0 0 14 14" className="size-3.5" fill="none" stroke="#000" strokeWidth="1.800" aria-hidden="true">
              <path d="M1 4h9v9H1zM4 4V1h9v9h-3" />
            </svg>
          </button>
          <button aria-label="Cerrar" className="mr-1 grid w-[67px] place-items-center">
            <svg viewBox="0 0 16 16" className="size-4" stroke="#000" strokeWidth="1.700" aria-hidden="true">
              <path d="M1 1l14 14M15 1L1 15" />
            </svg>
          </button>
        </header>
        <div role="menubar" className={"flex h-[32px] items-center gap-[22px] border-b-2 border-[#bcbcbc] pt-0.5 pl-3 text-[15px] leading-6 " + SEGOE}>
          {MENUS.map((m) => (
            <button key={m} role="menuitem">
              {m}
            </button>
          ))}
        </div>
        <Toolbar items={ROW1} className="h-[57px]" />
        <Toolbar items={ROW2} className="h-[58px]" />
        <Toolbar items={ROW3} className="h-[57px]" />
        <div className="flex flex-1">
          <Sidebar />
          <div className="flex w-[478px] shrink-0 flex-col">
            <Explorer />
            <div className={"mx-auto mt-px h-[9px] w-[150px] " + DOTS} />
            <Layers />
          </div>
          <div className="flex w-[11px] shrink-0 items-center">
            <div className={"mb-[200px] ml-px h-[200px] w-[9px] " + DOTS} />
          </div>
          <MapCanvas />
        </div>
        <StatusBar />
        <Taskbar />
      </div>
    </div>
  );
}
